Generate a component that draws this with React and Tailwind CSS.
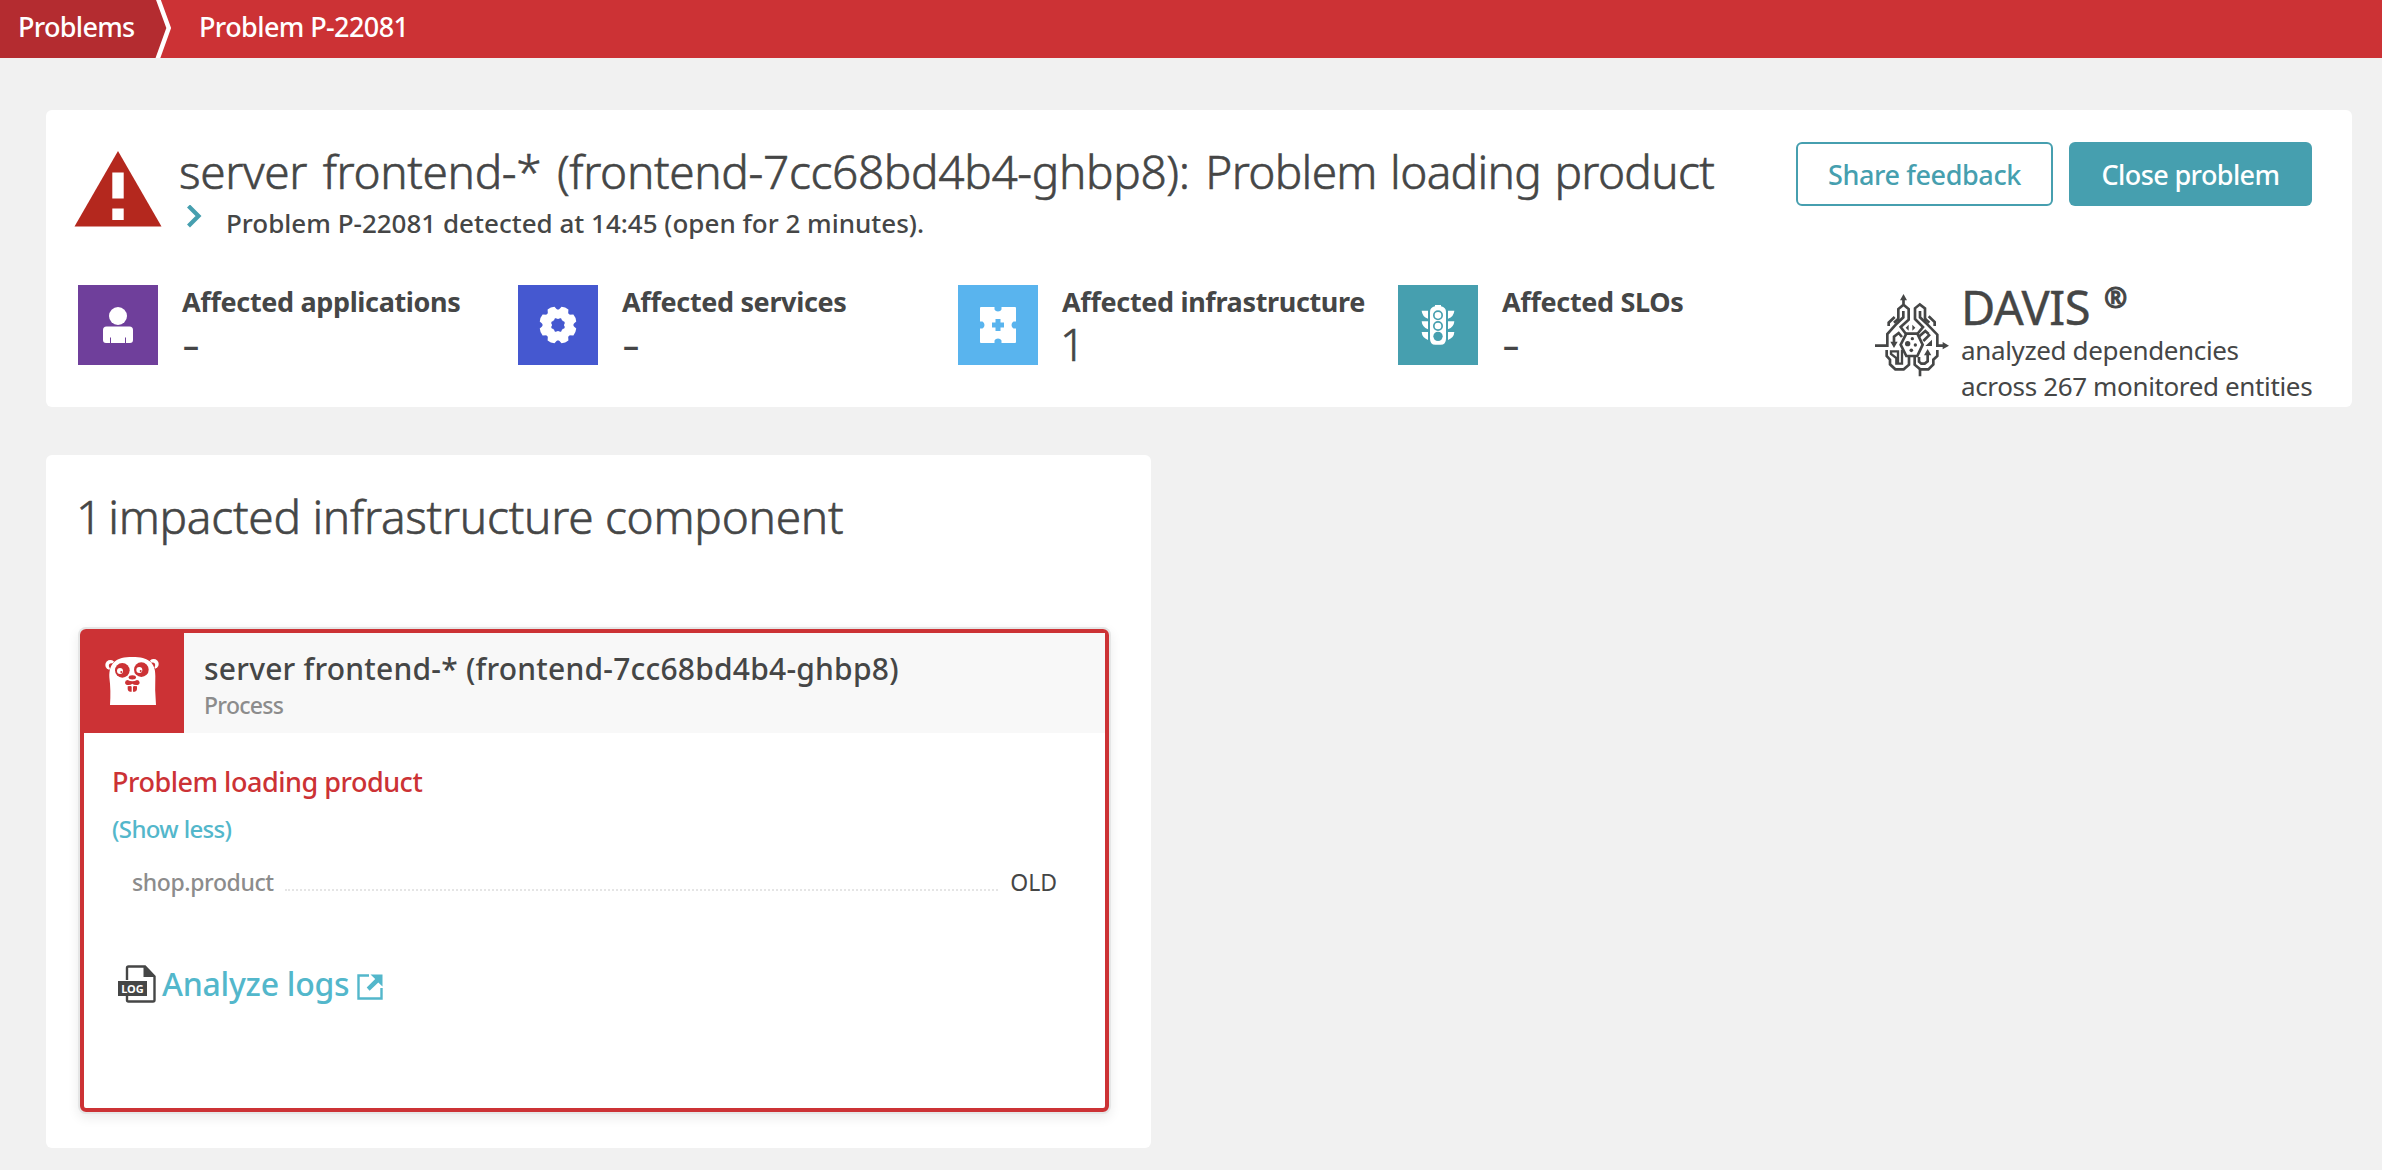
function WarningIcon() {
  return (
    <svg className="mt-[9px] h-[76px] w-[88px] shrink-0" viewBox="0 0 88 76">
      <path d="M44 0L87.5 75.5H0.5Z" fill="#b4281e" />
      <path d="M38.3 21.5h11.4v26H38.3zM38.3 57.5h11.4v11.4H38.3z" fill="#fff" />
    </svg>
  );
}

function PersonIcon() {
  return (
    <svg className="size-20" viewBox="0 0 80 80" fill="#fff">
      <circle cx="40" cy="31" r="9" />
      <path d="M28.5 41.5h23a3.5 3.5 0 0 1 3.5 3.5V55a3 3 0 0 1-3 3H28a3 3 0 0 1-3-3V45a3.5 3.5 0 0 1 3.5-3.5Z" />
      <path d="M32.5 52.5V58M47.5 52.5V58" stroke="#6f3f9b" strokeWidth="1" />
    </svg>
  );
}

const TEETH = [22.5, 67.5, 112.5, 157.5, 202.5, 247.5, 292.5, 337.5];

function GearIcon() {
  return (
    <svg className="size-20" viewBox="0 0 80 80" fill="#fff">
      <circle cx="40" cy="40" r="15.5" />
      {TEETH.map((a) => (
        <path key={a} d="M34.8 26L36.3 21.8Q40 20.6 43.7 21.8L45.2 26Z" transform={`rotate(${a} 40 40)`} />
      ))}
      <circle cx="40" cy="40" r="6.2" fill="#4558d0" />
      {TEETH.map((a) => (
        <circle key={a} cx="40" cy="34.3" r="1.5" fill="#4558d0" transform={`rotate(${a} 40 40)`} />
      ))}
    </svg>
  );
}

function PuzzleIcon() {
  return (
    <svg className="size-20" viewBox="0 0 80 80">
      <path
        fill="#fff"
        fillRule="evenodd"
        d="M23 22H36.5V24.5Q37.5 26.5 40 26.5T43.5 24.5V22H57Q58 22 58 23V36.5H55.5Q53.5 37.5 53.5 40T55.5 43.5H58V57Q58 58 57 58H43.5V55.5Q42.5 53.5 40 53.5T36.5 55.5V58H23Q22 58 22 57V43.5H24.5Q26.5 42.5 26.5 40T24.5 36.5H22V23Q22 22 23 22ZM37.5 34V37.5H34V42.5H37.5V46H42.5V42.5H46V37.5H42.5V34Z"
      />
    </svg>
  );
}

function TrafficIcon() {
  return (
    <svg className="size-20" viewBox="-6 -15 240 240">
      <path d="M105 49V45H123V49Q138 52 138 66V146Q138 164 122 164H106Q90 164 90 146V66Q90 52 105 49Z" fill="#fff" />
      <g fill="none" stroke="#469faf" strokeWidth="5">
        <circle cx="114" cy="76" r="12.5" />
        <circle cx="114" cy="108" r="12.5" />
      </g>
      <circle cx="114" cy="139" r="14" fill="#469faf" />
      {[62, 94, 126].map((y) => (
        <g key={y} fill="#fff">
          <path d={`M65 ${y}H84V${y + 24}Q66 ${y + 17} 65 ${y}Z`} />
          <path d={`M163 ${y}H144V${y + 24}Q162 ${y + 17} 163 ${y}Z`} />
        </g>
      ))}
    </svg>
  );
}

function DavisIcon() {
  return (
    <svg className="mt-[9px] h-[83px] w-[74px] shrink-0" viewBox="43 41 222 249">
      <g fill="none" stroke="#454646" strokeWidth="8">
        <path d="M128.5 58V74M113 122V86L128.5 73L144 86V118L120 140L136 161" />
        <path d="M128 92V111L108 130L80 161V196H43" />
        <path d="M163 118V84L177.5 72L193 84V124M163 116L187 140L170 161" />
        <path d="M178 92V111L200 132L230 163V196H248" />
        <path d="M84 137V127L102 110M100 127L113 115" />
        <path d="M222 137V125L204 108M206 127L193 115" />
        <path d="M137 160H170L186 193L170 227H137L120 193Z" />
        <path d="M124 170L114 158L100 169V187" />
        <path d="M176 168L194 152L204 161M188 182L208 162" />
        <path d="M78 209V227L88 238V252L104 267H129L145 253V228" />
        <path d="M124 208V250H107V233L91 221V213H112V250" strokeWidth="7" />
        <path d="M230 209V227L218 238V252L203 267H179L162 253V228" />
        <path d="M175 230V244L182 250H192L201 243V220M178 267V288" />
      </g>
      <g fill="#454646">
        <path d="M118 60L128.5 41L139 60ZM246 185L265 196L246 207ZM89 184H111L100 203ZM190 225L201 206L212 225Z" />
        <path d="M194 197L214 178V197ZM144 133V151L135 142ZM155 133V151L164 142Z" />
        <circle cx="141" cy="190" r="8" />
        <circle cx="155" cy="175" r="5" />
        <circle cx="164" cy="194" r="5" />
        <circle cx="152" cy="210" r="5.5" />
      </g>
    </svg>
  );
}

function GopherIcon() {
  return (
    <svg className="mt-[7px] ml-[6px] size-20" viewBox="0 0 240 240">
      <g fill="#fff">
        <circle cx="61" cy="75" r="15" />
        <circle cx="191" cy="72" r="15" />
      </g>
      <g fill="#cc3235">
        <circle cx="64" cy="77" r="7.5" />
        <circle cx="188" cy="75" r="7.5" />
      </g>
      <path
        d="M60 195Q63 150 58 112C57 68 78 51 127 51C176 51 197 68 196 108Q194 150 198 195Z"
        fill="#fff"
        stroke="#cc3235"
        strokeWidth="3"
        paintOrder="stroke"
      />
      <g fill="#cc3235">
        <circle cx="97" cy="91" r="22" />
        <circle cx="154" cy="89" r="22" />
      </g>
      <g fill="#fff">
        <circle cx="90" cy="93" r="9" />
        <circle cx="148" cy="90" r="9" />
      </g>
      <g fill="#cc3235">
        <circle cx="94" cy="96" r="3" />
        <circle cx="152" cy="93" r="3" />
        <ellipse cx="127" cy="112" rx="11" ry="6.5" />
        <path d="M113 120Q120 124 127 124Q134 124 141 120Q149 121 149 128Q148 135 139 135Q131 135 127 131Q123 135 115 135Q106 135 105 128Q105 121 113 120Z" />
        <path d="M113 139Q124 136 125 140V155H120Q114 155 113 148ZM141 139Q130 136 129 140V155H134Q140 155 141 148Z" />
      </g>
    </svg>
  );
}

function LogIcon() {
  return (
    <svg className="h-[38px] w-[38px] shrink-0" viewBox="0 0 38 38">
      <path d="M9 15V3Q9 1.5 10.5 1.5H27L36.5 11.5V35Q36.5 36.5 35 36.5H10.5Q9 36.5 9 35V30" fill="none" stroke="#454646" strokeWidth="2.4" />
      <path d="M25.5 1V12H37ZM0 16H29V31H0Z" fill="#454646" />
      <text x="14.5" y="27.5" textAnchor="middle" fontSize="11" fontWeight="700" fill="#fff">LOG</text>
    </svg>
  );
}

function ExternalIcon() {
  return (
    <svg className="size-[26px] shrink-0" viewBox="0 0 26 26">
      <path d="M12 1.5H1.5V24.5H24.5V14" fill="none" stroke="#53b7cb" strokeWidth="2.4" />
      <path d="M13.5 0.5H25.5V12.5L21.3 8.4L12.6 16.7L9.7 13.6L18.2 5.1Z" fill="#53b7cb" />
    </svg>
  );
}

function Stat({ label, value, color, icon }) {
  return (
    <div className="flex w-[440px] gap-6">
      <div className={"size-20 shrink-0 " + color}>{icon}</div>
      <div className="-mt-px">
        <div className="text-[27px] leading-9 font-bold tracking-[-0.35px] whitespace-nowrap">{label}</div>
        {value === "–" ? (
          <div className="ml-px text-[32px] leading-[49px] font-semibold">{value}</div>
        ) : (
          <div className="-ml-[2px] text-[44px] leading-[48px] font-light [-webkit-text-stroke:0.6px]">{value}</div>
        )}
      </div>
    </div>
  );
}

export default function App() {
  return (
    <div className="h-[1170px] w-[2382px] overflow-hidden bg-[#f1f1f1] font-['Noto_Sans','Open_Sans',sans-serif] text-[#454646]">
      <header className="flex h-[58px] bg-[#cc3235] text-[27px] leading-[54px] font-medium text-white">
        <div className="w-[146px] bg-[#b42c30] pl-[18px] tracking-[-0.7px]">Problems</div>
        <svg className="h-[58px] w-[30px]" viewBox="0 0 30 58">
          <path d="M0 0H11L22.5 28L11 58H0Z" fill="#b42c30" />
          <path d="M11 -4L22.7 28L10.5 62" fill="none" stroke="#fff" strokeWidth="4.5" />
        </svg>
        <div className="pl-[23px] tracking-[-0.6px]">Problem P-22081</div>
      </header>

      <section className="mt-[52px] ml-[46px] h-[297px] w-[2306px] rounded-md bg-white pt-8 pr-[40px] pl-7">
        <div className="flex h-[143px]">
          <WarningIcon />
          <div className="-mt-px ml-[16px]">
            <h1 className="ml-px text-[46px] leading-[60px] font-light whitespace-nowrap [-webkit-text-stroke:0.6px]">
              <span className="tracking-[-0.35px] [word-spacing:4px]">server frontend-* (frontend-7cc68bd4b4-ghbp8): </span>
              <span className="tracking-[-0.67px] [word-spacing:2px]">Problem loading product</span>
            </h1>
            <div className="flex pt-1">
              <svg className="ml-[8px] h-6 w-[18px]" viewBox="0 0 18 24">
                <path d="M2.5 1L12.5 11L2.5 21" fill="none" stroke="#469faf" strokeWidth="4.2" />
              </svg>
              <p className="ml-[22px] text-[26px] leading-9 font-medium">
                Problem P-22081 detected at 14:45 (open for 2 minutes).
              </p>
            </div>
          </div>
          <div className="ml-auto flex h-16 gap-4 text-[27px] font-medium">
            <button className="w-[257px] rounded-md border-2 border-[#469faf] pt-0.5 tracking-[-0.4px] text-[#469faf]">
              Share feedback
            </button>
            <button className="w-[243px] rounded-md bg-[#469faf] pt-0.5 tracking-[-0.6px] text-white">Close problem</button>
          </div>
        </div>

        <div className="flex pl-1">
          <Stat label="Affected applications" value="–" color="bg-[#6f3f9b]" icon={<PersonIcon />} />
          <Stat label="Affected services" value="–" color="bg-[#4558d0]" icon={<GearIcon />} />
          <Stat label="Affected infrastructure" value="1" color="bg-[#59b4ee]" icon={<PuzzleIcon />} />
          <Stat label="Affected SLOs" value="–" color="bg-[#469faf]" icon={<TrafficIcon />} />
          <div className="ml-auto flex gap-[12px]">
            <DavisIcon />
            <div className="-mt-[3px] w-[351px] whitespace-nowrap">
              <div className="flex h-[50px] text-[47px] leading-[50px] tracking-[-0.5px]">
                <span className="[-webkit-text-stroke:0.4px]">DAVIS</span>
                <span className="-mt-[3px] ml-[14px] text-[28px] leading-[36px] font-bold [-webkit-text-stroke:1px]">®</span>
              </div>
              <div className="text-[26px] leading-9 tracking-[-0.36px]">
                analyzed dependencies
                <br />
                across 267 monitored entities
              </div>
            </div>
          </div>
        </div>
      </section>

      <section className="mt-[48px] ml-[46px] h-[693px] w-[1105px] rounded-md bg-white pt-[31px] pl-[34px]">
        <h2 className="-ml-[4px] text-[46px] leading-[60px] font-light tracking-[-0.26px] [-webkit-text-stroke:0.6px]">
          <span className="tracking-[-5px]">1 </span>
          <span className="ml-[4px]">impacted infrastructure component</span>
        </h2>
        <div className="mt-[83px] h-[483px] w-[1029px] rounded-[6px] border-4 border-[#cc3235] shadow-[0_0_0_2px_#e5e6e6,0_4px_12px_2px_rgba(0,0,0,0.08)]">
          <div className="flex h-[100px] bg-[#f8f8f8]">
            <div className="w-[100px] bg-[#cc3235]">
              <GopherIcon />
            </div>
            <div className="ml-[20px] pt-[16px]">
              <div className="text-[30px] leading-10 font-medium tracking-[0.22px]">server frontend-* (frontend-7cc68bd4b4-ghbp8)</div>
              <div className="text-[23px] leading-[32px] font-medium tracking-[-0.7px] text-[#8c8c8c]">Process</div>
            </div>
          </div>
          <div className="pt-[29px] pl-[28px] font-medium">
            <div className="text-[27px] leading-10 tracking-[-0.48px] text-[#cc3235]">Problem loading product</div>
            <div className="mt-[9px] text-[24px] leading-9 tracking-[-0.65px] text-[#53b7cb]">(Show less)</div>
            <div className="mt-[18px] mr-[48px] ml-5 flex text-[23px] leading-[34px]">
              <span className="tracking-[-0.4px] text-[#8c8c8c]">shop.product</span>
              <span className="mr-3 ml-[11px] h-[26px] grow border-b-2 border-dotted border-[#e5e5e5]" />
              <span className="font-normal">OLD</span>
            </div>
            <div className="mt-[66px] ml-[6px] flex">
              <LogIcon />
              <span className="-mt-[5px] ml-[6px] text-[32px] leading-[48px] tracking-[-0.25px] text-[#53b7cb]">Analyze logs</span>
              <span className="mt-[9px] ml-[8px]">
                <ExternalIcon />
              </span>
            </div>
          </div>
        </div>
      </section>
    </div>
  );
}
